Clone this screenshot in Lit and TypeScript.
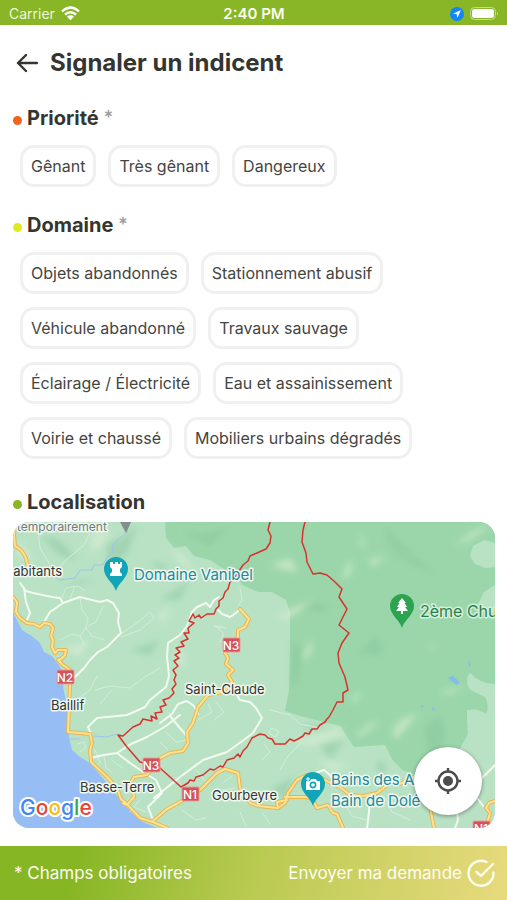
import { LitElement, html, css, svg } from "lit";
import { customElement, property, state } from "lit/decorators.js";

const PRIORITIES = ["Gênant", "Très gênant", "Dangereux"];

const DOMAINS = [
  "Objets abandonnés",
  "Stationnement abusif",
  "Véhicule abandonné",
  "Travaux sauvage",
  "Éclairage / Électricité",
  "Eau et assainissement",
  "Voirie et chaussé",
  "Mobiliers urbains dégradés",
];

const MAIN_ROADS = [
  "M15 522L14 535L15 546L21 550L25 556L27 562L28 568",
  "M13 597L17 602L16 612L20 618L27 623L34 624L40 627L44 623L50 624L53 628L51 636L53 640L52 647L55 653L58 650L66 650L65 655L61 659L58 660L63 665L70 670L70 685L68 732L80 733L90 734L92 743L90 750L91 762L107 777L117 788L121 799L127 804L140 818L153 822L167 828",
  "M123 803L127 805L134 797L133 790L130 784L134 777L147 775L160 758L170 753L183 751L188 743L187 732L193 723L198 707L208 695L223 692L232 682L228 675L233 670L226 664L228 658L225 653L230 645L238 637L238 630L245 627L249 619L240 609",
  "M153 821L167 809L180 802L200 790L217 773L225 769L238 773L240 788L250 803L258 806L278 808L285 803L288 793L297 780L307 775L320 778L340 787L350 795L363 796L377 793L390 783L400 784L413 777L430 782",
  "M285 797L293 797L307 797L313 800L317 808L328 805L333 813L337 814L343 828",
  "M278 808L277 802L287 800",
  "M431 790L430 807L434 828",
  "M495 801L489 803L486 808L490 813L488 820L492 828",
];

const SIDE_ROADS = [
  "M20 583L26 591L33 593L52 597L60 598L63 603L80 597L100 602L107 600L113 603L119 613L118 622L121 633L107 647L98 652L90 660L84 668L75 677",
  "M63 603L50 612L44 622L40 627",
  "M24 588L26 602L30 613L27 620",
  "M219 597L214 600L210 607L206 603L197 607L192 612L187 626L180 635L168 643L167 657L169 676L166 687L150 700L145 707L127 715L97 718L88 727L91 734",
  "M218 610L222 614L230 617L236 613L240 609",
  "M90 758L104 755L117 753L131 744L147 737L166 726L180 715",
  "M117 753L130 763L143 772L156 780L162 793L148 807L153 820",
  "M160 723L172 714L178 704L187 701L194 706L198 714",
  "M170 716L179 727L187 736",
  "M154 798L180 777L203 760L227 752L241 742L253 733L262 718L256 708L250 702L240 700L237 695",
  "M370 797L369 812L367 828",
  "M495 765L488 772L482 778",
  "M478 799L483 806",
  "M457 812L458 820L455 828",
  "M315 773L324 770L330 775L337 786",
];

const LANES = [
  "M62 598L66 588L78 586L84 590M70 600L74 588M80 597L82 610L88 618L86 628L80 636L84 644",
  "M88 626L96 622L103 606M104 640L92 636L86 628",
  "M60 640L72 634L80 636M121 634L138 622L150 612L154 618L140 630L121 637",
  "M50 565L40 548L38 530M54 575L66 560L84 545L92 528",
  "M95 690L110 686L130 688L146 676L160 668M100 704L112 690M76 700L90 690L97 676",
  "M78 744L84 742L86 748L80 752M95 750L100 762L96 768M104 756L106 768L112 772M112 760L122 768",
  "M166 732L176 742L186 740M160 742L168 750M176 722L168 712M198 720L212 712L208 704M214 720L224 712L216 702",
  "M215 625L224 634L220 642M214 626L226 628M196 770L206 782M178 780L186 790",
  "M224 782L232 776M222 790L235 788M262 760L270 752L264 744M300 744L288 756L280 770",
  "M270 710L290 715L300 724L320 728M272 728L279 732L275 737L269 733Z",
  "M140 800L130 812M136 808L146 812M182 810L196 820L206 818M240 812L246 826M262 812L270 824",
  "M344 803L352 816L366 820M384 796L392 812L410 820M404 800L416 808",
  "M240 588L242 600L238 606M222 575L230 570",
];

const FOREST =
  "M165 522L166 538L174 548L186 546L194 556L210 560L222 568L238 577L242 585L258 592L272 592L286 600L290 612L290 650L289 690L285 711L300 716L340 726L354 747L385 745L392 759L402 770L418 776L440 776L458 752L468 734L467 722L467 710Q478 708 486 714Q490 706 485 697L470 690Q464 680 470 673Q480 684 495 684L495 522Z";

const BOUNDARY =
  "M270 522L268 530L271 536L270 543L266 549L257 553L250 556L248 561L243 565L239 571L235 577L230 582L228 589L225 592L223 598L219 601L219 606L216 609L214 614L207 614L201 618L199 615L195 618L193 614L189 621L194 623L188 628L189 633L184 633L188 639L181 642L184 646L176 648L180 652L175 655L179 658L174 661L178 666L173 670L176 675L174 680L176 684L172 689L174 693L169 698L163 700L166 705L160 707L162 712L155 713L157 719L151 716L152 721L143 719L140 724L133 727L123 736L118 735L127 747L140 762L152 765L160 768L170 777L181 787L188 783L190 780L194 781L196 777L203 775L210 769L214 770L220 766L223 767L227 760L234 758L238 754L240 757L243 751L247 747L252 738L260 734L265 735L268 738L272 739L275 744L285 744L290 739L294 741L298 739L303 736L305 733L309 734L312 729L317 729L320 725L325 722L327 719L329 717L333 710L337 702L343 702L343 693L348 690L345 677L339 663L338 653L342 643L349 633L339 625L347 609L339 597L342 589L335 582L327 575L320 573L313 574L307 562L306 553L302 542L303 530L305 522";

const PIN = "M0 22C-2 14-12 9-12 0A12 12 0 0 1 12 0C12 9 2 14 0 22Z";

const shield = (x: number, y: number, name: string) => svg`
  <g transform="translate(${x} ${y})">
    <rect class="shield" x="-8" y="-7" width="17" height="14" rx="1"></rect>
    <text class="shield-name" x="0" y="5" text-anchor="middle">${name}</text>
  </g>`;

@customElement("status-bar")
class StatusBar extends LitElement {
  static styles = css`
    :host {
      display: grid;
      grid-template-columns: 1fr auto 1fr;
      align-items: center;
      height: 25px;
      padding: 2px 8px 0 9px;
      box-sizing: border-box;
      background: #88b626;
      color: #fafdf0;
      font-size: 14px;
      line-height: 20px;
    }
    .side {
      display: flex;
      align-items: center;
      gap: 6px;
    }
    .end {
      justify-content: flex-end;
    }
    .carrier {
      color: #edf5d8;
    }
    .clock {
      font-size: 15px;
      font-weight: 600;
    }
    svg {
      display: block;
    }
  `;

  render() {
    return html`
      <div class="side">
        <span class="carrier">Carrier</span>
        <svg width="19" height="15" viewBox="0 0 19 15" aria-hidden="true">
          <g fill="none" stroke="#fff" stroke-width="2.4">
            <path d="M1 5.4Q9.500-2.400 18 5.400"></path>
            <path d="M4 8.700Q9.500 3.700 15 8.700"></path>
          </g>
          <path d="M6 10.600Q9.500 7.800 13 10.600L9.500 14.200Z" fill="#fff"></path>
        </svg>
      </div>
      <span class="clock">2:40 PM</span>
      <div class="side end">
        <svg width="14" height="14" viewBox="0 0 14 14" aria-hidden="true">
          <circle cx="7" cy="7" r="7" fill="#1485f5"></circle>
          <path d="M11 3L3 6.800L6.700 7.300L7.300 11Z" fill="#fff"></path>
        </svg>
        <svg width="29" height="14" viewBox="0 0 29 14" aria-hidden="true">
          <rect x="0.500" y="0.500" width="25" height="12" rx="4" fill="none" stroke="#c5db92"></rect>
          <rect x="2" y="2" width="22" height="9" rx="2.500" fill="#fff"></rect>
          <path d="M27 4.500Q29 6.500 27 8.500Z" fill="#c5db92"></path>
        </svg>
      </div>
    `;
  }
}

@customElement("chip-group")
class ChipGroup extends LitElement {
  @property({ attribute: false }) options: string[] = [];
  @property() name = "";
  @state() private selected = "";

  static styles = css`
    :host {
      display: flex;
      flex-wrap: wrap;
      gap: 13px 12px;
      max-width: 420px;
    }
    .chip {
      box-sizing: border-box;
      height: 42px;
      padding: 0 8px;
      border: 3px solid #f0f0f0;
      border-radius: 14px;
      background: #fff;
      color: #45453f;
      font: inherit;
      font-size: 16px;
      line-height: 20px;
      cursor: pointer;
    }
    .chip[aria-pressed="true"] {
      border-color: #88b626;
    }
  `;

  render() {
    return this.options.map(
      (option) => html`<button
        class="chip"
        type="button"
        aria-pressed=${option === this.selected}
        @click=${() => (this.selected = option)}
      >${option}</button>`
    );
  }
}

@customElement("area-map")
class AreaMap extends LitElement {
  static styles = css`
    :host {
      display: block;
      position: relative;
      overflow: hidden;
      border-radius: 16px;
      background: #b9e2c5;
    }
    .map {
      display: block;
      position: absolute;
      inset: 0;
      width: 100%;
      height: 100%;
    }
    .line {
      fill: none;
      stroke-linejoin: round;
      stroke-linecap: round;
    }
    .casing {
      stroke: #e8b550;
      stroke-width: 4;
    }
    .main {
      stroke: #fde293;
      stroke-width: 2;
    }
    .side {
      stroke: #f3faef;
      stroke-width: 2;
    }
    .lane {
      stroke: #d3eed8;
      stroke-width: 1;
    }
    .stream {
      stroke: #9cc5ea;
      stroke-width: 1;
    }
    .boundary {
      stroke: #d8322d;
      stroke-width: 1.5;
    }
    .label {
      font-size: 13px;
      fill: #333;
      stroke: #eef8ef;
      stroke-width: 3;
      paint-order: stroke;
      stroke-linejoin: round;
    }
    .place {
      font-size: 15px;
      fill: #21899a;
    }
    .park {
      font-size: 16px;
      fill: #2a7f4f;
      stroke: #d5f0da;
    }
    .closed {
      font-size: 12px;
      fill: #74797c;
    }
    .shield {
      fill: #d4525a;
      stroke: #e99a98;
      stroke-width: 1;
    }
    .shield-name {
      font-size: 12px;
      font-weight: 500;
      fill: #fff;
    }
    .google {
      font-size: 21px;
      font-weight: 500;
      stroke: #fff;
      stroke-width: 4;
      paint-order: stroke;
      stroke-linejoin: round;
    }
    .locate {
      position: absolute;
      right: 13px;
      bottom: 13px;
      display: grid;
      place-items: center;
      width: 68px;
      height: 68px;
      padding: 0;
      border: 0;
      border-radius: 50%;
      background: #fff;
      box-shadow: 0 1px 4px rgba(0, 0, 0, 0.4);
      cursor: pointer;
    }
  `;

  render() {
    return html`
      <svg class="map" viewBox="13 522 482 306" preserveAspectRatio="xMidYMid slice" role="img" aria-label="Carte de Saint-Claude">
        <defs>
          <filter id="relief" x="-20%" y="-20%" width="140%" height="140%">
            <feGaussianBlur stdDeviation="3"></feGaussianBlur>
          </filter>
        </defs>
        <rect x="-200" y="322" width="1000" height="800" fill="#b9e2c5"></rect>
        <path d=${FOREST} fill="#9bd6aa"></path>
        <path d="M495 543L484 540L473 546L470 556L475 564L486 568L495 567ZM495 585L484 592L478 604L484 610L495 612Z" fill="#b9e2c5"></path>
        <g filter="url(#relief)">
          <g fill="#86c49a" opacity="0.450">
            <path d="M384 524L396 540L414 552L400 554L388 544ZM360 650L376 636L384 648L376 656L358 652Z"></path>
            <path d="M424 726L440 716L446 732L438 756L428 752ZM300 600L330 606L324 612L296 608Z"></path>
            <path d="M180 530L200 534L230 528L210 546ZM106 545L122 538L138 524L128 552L110 572Z"></path>
            <path d="M150 560L170 566L160 572ZM385 550L420 560L436 574L410 564Z"></path>
            <path d="M40 535L60 540L78 560L60 556ZM292 640L304 650L298 680L292 690ZM320 745L345 740L330 760Z"></path>
            <path d="M300 722L330 728L310 730ZM60 590L80 580L96 580ZM130 650L160 640L150 656Z"></path>
            <path d="M270 790L295 775L285 800ZM160 600L190 580L180 600ZM376 760L388 764L380 780Z"></path>
          </g>
          <g fill="#dcefd2" opacity="0.600">
            <path d="M392 732L400 720L418 713L406 728L396 740ZM342 576L349 562L353 562L348 578Z"></path>
            <path d="M302 655L312 640L312 652L304 660ZM455 544L475 530L490 526L470 540Z"></path>
            <path d="M14 540L26 548L34 562L20 558ZM92 532L112 530L100 548L90 550Z"></path>
            <path d="M270 565L290 558L298 572L284 570ZM275 618L300 604L314 600L290 618ZM368 560L386 556L374 566Z"></path>
            <path d="M290 742L340 728L345 734L310 746ZM355 736L372 722L378 722L362 736Z"></path>
            <path d="M440 692L466 686L450 694ZM350 700L362 690L356 702ZM428 646L436 643L432 648Z"></path>
            <path d="M156 616L172 606L162 622ZM170 545L185 558L196 574L180 562ZM60 650L90 640L80 656Z"></path>
            <path d="M175 640L186 660L180 668ZM320 760L350 765L330 772ZM360 534L366 548L360 544Z"></path>
          </g>
        </g>
        <path d="M-200 560L13 612L22 630L33 637L40 643L44 652L52 656L58 664L64 673L63 687L67 705L69 737L72 750L80 757L90 763L107 783L123 803L134 815L143 822L157 828L170 840L170 1100L-200 1100Z" fill="#97bdf5"></path>
        <path class="line stream" d="M128 522L127 533L119 539L112 545L113 552L107 557L103 565L94 565L92 570L80 570L75 578L60 580L50 574L37 575L26 566M70 739L80 739M94 736L106 737L118 734"></path>
        <path d="M448 678L453 675L460 683L456 685ZM468 660L471 666L469 667ZM421 705L424 706L422 708ZM432 706L436 711L432 709Z" fill="#85bdea"></path>
        ${LANES.map((d) => svg`<path class="line lane" d=${d}></path>`)}
        ${SIDE_ROADS.map((d) => svg`<path class="line side" d=${d}></path>`)}
        ${MAIN_ROADS.map((d) => svg`<path class="line casing" d=${d}></path>`)}
        ${MAIN_ROADS.map((d) => svg`<path class="line main" d=${d}></path>`)}
        <path class="line boundary" d=${BOUNDARY}></path>
        ${shield(65, 677, "N2")} ${shield(231, 645, "N3")} ${shield(151, 765, "N3")}
        ${shield(190, 794, "N1")} ${shield(481, 828, "N1")}
        <path d="M119 520H132L126 533Z" fill="#7f8f8b"></path>
        <text class="label closed" x="17" y="531">temporairement</text>
        <text class="label" x="62" y="576" text-anchor="end">abitants</text>
        <text class="label" x="51" y="710">Baillif</text>
        <text class="label" x="185" y="694">Saint-Claude</text>
        <text class="label" x="80" y="792">Basse-Terre</text>
        <text class="label" x="212" y="800">Gourbeyre</text>
        <text class="label place" x="134" y="580">Domaine Vanibel</text>
        <text class="label place park" x="420" y="617">2ème Chu</text>
        <text class="label place" x="331" y="785">Bains des Amours</text>
        <text class="label place" x="331" y="806">Bain de Dolé</text>
        <g transform="translate(116 569)">
          <path d=${PIN} fill="#12a5b8"></path>
          <path d="M-6-7H-3V-5H-1V-7H2V-5H4V-7H6V-2L4 0V3L6 5V7H-6V5L-4 3V0L-6-2Z" fill="#fff"></path>
        </g>
        <g transform="translate(402 606)">
          <path d=${PIN} fill="#2ca350"></path>
          <path d="M0-8L4-3H2.500L5 1H3L6 5H1V8H-1V5H-6L-3 1H-5L-2.500-3H-4Z" fill="#fff"></path>
        </g>
        <g transform="translate(313 784)">
          <path d=${PIN} fill="#12a5b8"></path>
          <path d="M-7-3H-3L-2-5H3L4-3H7V6H-7Z" fill="#fff"></path>
          <circle cx="0" cy="1" r="2.600" fill="none" stroke="#12a5b8" stroke-width="1.600"></circle>
          <path d="M-5-7V-3M-7-5H-3" stroke="#fff" stroke-width="1"></path>
        </g>
        <text class="google" x="20" y="815"><tspan fill="#4285f4">G</tspan><tspan fill="#ea4335">o</tspan><tspan fill="#fbbc05">o</tspan><tspan fill="#4285f4">g</tspan><tspan fill="#34a853">l</tspan><tspan fill="#ea4335">e</tspan></text>
      </svg>
      <button class="locate" type="button" aria-label="Ma position">
        <svg width="28" height="28" viewBox="0 0 28 28" aria-hidden="true">
          <circle cx="14" cy="14" r="5" fill="#4c4c4c"></circle>
          <circle cx="14" cy="14" r="9.500" fill="none" stroke="#4c4c4c" stroke-width="2.400"></circle>
          <path d="M14 1V5M14 23V27M1 14H5M23 14H27" stroke="#4c4c4c" stroke-width="2.400"></path>
        </svg>
      </button>
    `;
  }
}

@customElement("app-root")
class AppRoot extends LitElement {
  static styles = css`
    :host {
      display: flex;
      flex-direction: column;
      min-height: 100vh;
      background: #fff;
      color: #35352f;
      font-family: Inter, "Liberation Sans", sans-serif;
    }
    .header {
      display: flex;
      align-items: center;
      gap: 12px;
      padding: 22px 16px 0;
    }
    .back {
      display: block;
      padding: 0;
      border: 0;
      background: none;
      color: inherit;
      cursor: pointer;
    }
    .back svg {
      display: block;
    }
    .title {
      margin: 0;
      font-size: 24px;
      line-height: 32px;
      font-weight: 700;
    }
    .form {
      flex: 1;
      display: flex;
      flex-direction: column;
      padding: 27px 12px 18px 13px;
    }
    .heading {
      display: flex;
      align-items: center;
      gap: 5px;
      margin: 0;
      font-size: 20px;
      line-height: 24px;
      font-weight: 700;
    }
    .dot {
      width: 9px;
      height: 9px;
      margin-top: 5px;
      border-radius: 50%;
    }
    .orange {
      background: #f2641d;
    }
    .yellow {
      background: #deeb22;
    }
    .green {
      background: #88b626;
    }
    .required {
      color: #999;
      font-size: 18px;
      font-weight: 500;
    }
    .chips {
      margin: 15px 0 26px 7px;
    }
    .domains {
      margin-bottom: 31px;
    }
    .area {
      flex: 1;
      min-height: 240px;
      margin-top: 8px;
    }
    .footer {
      display: flex;
      align-items: center;
      justify-content: space-between;
      height: 54px;
      padding: 0 12px 0 14px;
      background: linear-gradient(105deg, #86b624 15%, #b9ca51 50%, #e8da7e 100%);
      color: #fdfdf0;
      font-size: 17px;
      line-height: 24px;
    }
    .send {
      display: flex;
      align-items: center;
      gap: 5px;
      padding: 0;
      border: 0;
      background: none;
      color: inherit;
      font: inherit;
      cursor: pointer;
    }
  `;

  render() {
    return html`
      <status-bar></status-bar>
      <header class="header">
        <button class="back" type="button" aria-label="Retour">
          <svg width="22" height="22" viewBox="0 0 22 22" fill="none" stroke="currentColor" stroke-width="2.400" stroke-linecap="round" stroke-linejoin="round" aria-hidden="true">
            <path d="M21 11H2M10 3L2 11L10 19"></path>
          </svg>
        </button>
        <h1 class="title">Signaler un indicent</h1>
      </header>
      <main class="form">
        <h2 class="heading"><span class="dot orange"></span>Priorité <span class="required">*</span></h2>
        <chip-group class="chips" role="group" aria-label="Priorité" .options=${PRIORITIES}></chip-group>
        <h2 class="heading"><span class="dot yellow"></span>Domaine <span class="required">*</span></h2>
        <chip-group class="chips domains" role="group" aria-label="Domaine" .options=${DOMAINS}></chip-group>
        <h2 class="heading"><span class="dot green"></span>Localisation</h2>
        <area-map class="area"></area-map>
      </main>
      <footer class="footer">
        <span>* Champs obligatoires</span>
        <button class="send" type="button">
          Envoyer ma demande
          <svg width="28" height="28" viewBox="0 0 28 28" fill="none" stroke="currentColor" stroke-width="2.400" stroke-linecap="round" stroke-linejoin="round" aria-hidden="true">
            <path d="M19.500 3A12.500 12.500 0 1 0 26.500 13.500"></path>
            <path d="M9.500 13L14 17L26 5"></path>
          </svg>
        </button>
      </footer>
    `;
  }
}
